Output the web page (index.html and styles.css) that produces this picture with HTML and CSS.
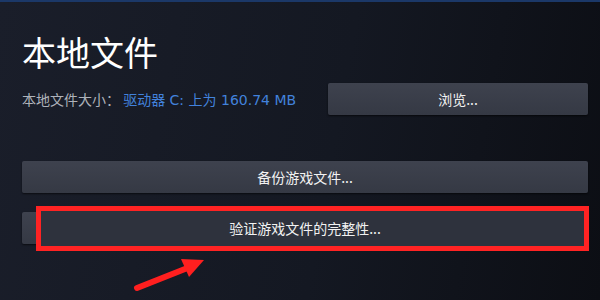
FILE: index.html
```html
<!DOCTYPE html>
<html lang="zh-CN">
<head>
    <meta charset="UTF-8">
    <meta name="viewport" content="width=device-width, initial-scale=1.0">
    <title>本地文件</title>
    <link rel="stylesheet" href="styles.css">
</head>
<body>

    <div class="panel">
        <h1 class="title">本地文件</h1>
        <div class="size-row">
            <p class="size-info">本地文件大小： <span class="size-value">驱动器 C: 上为 160.74 MB</span></p>
            <button class="btn browse-btn">浏览...</button>
        </div>
        <div class="actions">
            <button class="btn">备份游戏文件...</button>
            <button class="btn verify-btn"><span class="btn-label">验证游戏文件的完整性...</span></button>
        </div>

        <!-- annotation arrow -->
        <svg class="arrow" width="80" height="45" viewBox="0 0 80 45">
            <line x1="7" y1="36" x2="60" y2="15" stroke="#ff1f1f" stroke-width="6" stroke-linecap="round"/>
            <polygon points="74,8 51,7 59,25" fill="#ff1f1f"/>
        </svg>
    </div>

</body>
</html>
```

FILE: styles.css
```css
body {
    margin: 0;
    padding: 0;
    width: 600px;
    height: 300px;
    overflow: hidden;
    font-family: "Noto Sans CJK SC", "Noto Sans", sans-serif;
    background: linear-gradient(100deg, #1a1e2a 0%, #141822 55%, #0c0e14 100%);
}
.panel {
    position: relative;
    height: 298px;
    padding: 0 12px 0 22px;
    border-top: 2px solid #1b3868;
}
.title {
    margin: 30px 0 0 0;
    font-size: 34px;
    line-height: 40px;
    font-weight: normal;
    color: #ffffff;
}
.size-row {
    display: flex;
    align-items: center;
    justify-content: space-between;
    margin-top: 11px;
}
.size-info {
    margin: 0;
    font-size: 14px;
    color: #aeb2ba;
}
.size-value {
    font-family: "DejaVu Sans", "Noto Sans CJK SC", sans-serif;
    color: #4282dc;
}
.btn {
    height: 32px;
    border: none;
    border-radius: 2px;
    background: linear-gradient(#3e424e, #353944);
    box-shadow: 0 1px 2px rgba(0, 0, 0, 0.6);
    color: #f2f2f2;
    font-family: inherit;
    font-size: 14px;
    padding: 0;
    cursor: pointer;
}
.browse-btn {
    width: 260px;
}
.actions {
    display: flex;
    flex-direction: column;
    gap: 19px;
    margin-top: 46px;
}
.verify-btn {
    position: relative;
}
.verify-btn::before {
    content: "";
    position: absolute;
    top: -6px;
    bottom: -7px;
    left: 14px;
    right: -1px;
    border: 5px solid #ff2323;
    background: #2e323d;
}
.btn-label {
    position: relative;
}
.arrow {
    position: absolute;
    left: 130px;
    top: 250px;
}
```
